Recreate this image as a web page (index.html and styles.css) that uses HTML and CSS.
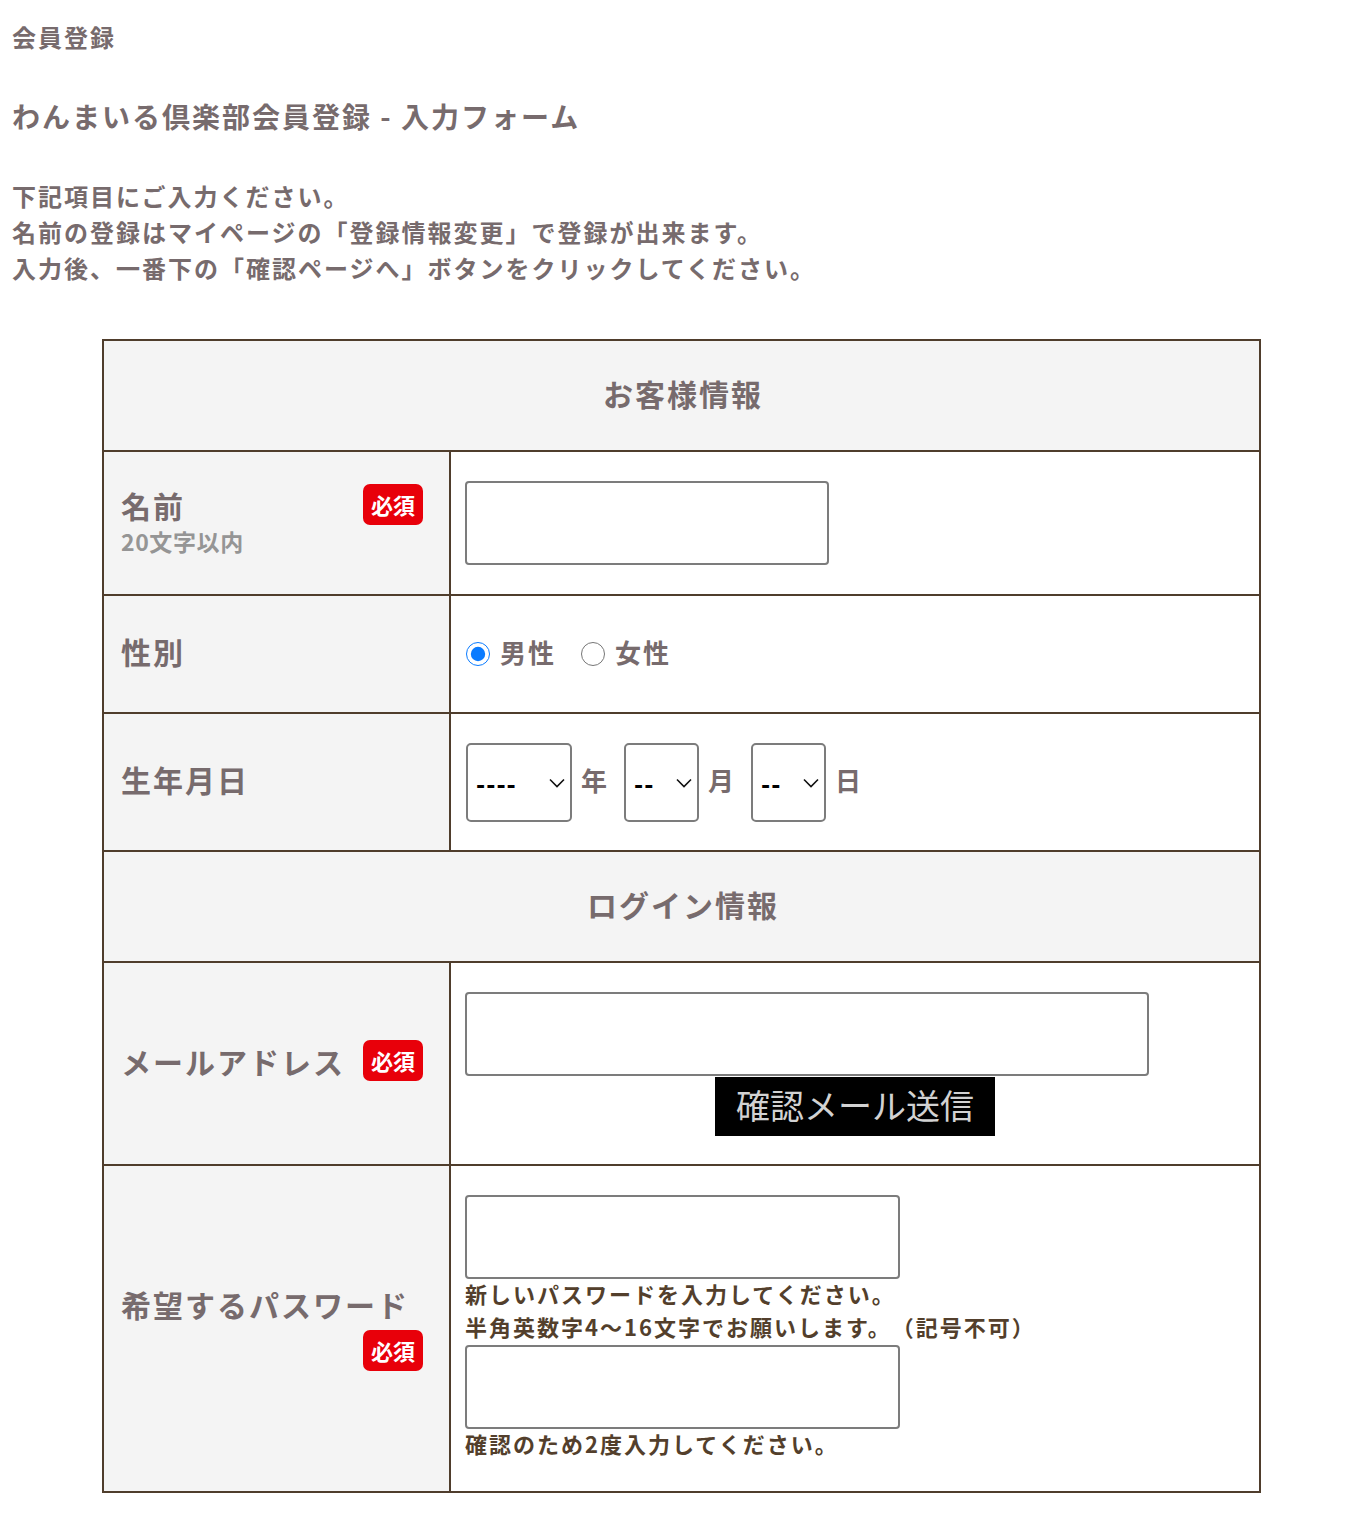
FILE: index.html
```html
<!DOCTYPE html>
<html lang="ja">
<head>
<meta charset="utf-8">
<title>会員登録</title>
<link rel="stylesheet" href="styles.css">
</head>
<body>
<div class="page">
  <h1 class="crumb">会員登録</h1>
  <h2 class="title">わんまいる倶楽部会員登録 - 入力フォーム</h2>
  <p class="intro">下記項目にご入力ください。<br>名前の登録はマイページの「登録情報変更」で登録が出来ます。<br>入力後、一番下の「確認ページへ」ボタンをクリックしてください。</p>

  <div class="form">
    <div class="sec sec-top">お客様情報</div>

    <div class="lab row-name">
      <div class="lab-main">
        <div class="lab-t">名前</div>
        <div class="lab-sub">20文字以内</div>
      </div>
      <span class="req">必須</span>
    </div>
    <div class="val row-name"><input class="tx tx-name" type="text"></div>

    <div class="lab row-gender"><div class="lab-t">性別</div></div>
    <div class="val row-gender">
      <label class="radio"><input type="radio" name="sex" checked><span>男性</span></label>
      <label class="radio"><input type="radio" name="sex"><span>女性</span></label>
    </div>

    <div class="lab row-birth"><div class="lab-t">生年月日</div></div>
    <div class="val row-birth">
      <span class="sel sel-y"><select><option>----</option></select><svg class="chev" viewBox="0 0 16 10" width="16" height="10"><path d="M1 1.5 L8 8.5 L15 1.5" fill="none" stroke="#111" stroke-width="1.6"/></svg></span>
      <span class="unit">年</span>
      <span class="sel sel-s"><select><option>--</option></select><svg class="chev" viewBox="0 0 16 10" width="16" height="10"><path d="M1 1.5 L8 8.5 L15 1.5" fill="none" stroke="#111" stroke-width="1.6"/></svg></span>
      <span class="unit">月</span>
      <span class="sel sel-s"><select><option>--</option></select><svg class="chev" viewBox="0 0 16 10" width="16" height="10"><path d="M1 1.5 L8 8.5 L15 1.5" fill="none" stroke="#111" stroke-width="1.6"/></svg></span>
      <span class="unit">日</span>
    </div>

    <div class="sec">ログイン情報</div>

    <div class="lab row-mail">
      <div class="lab-t">メールアドレス</div>
      <span class="req">必須</span>
    </div>
    <div class="val row-mail val-col">
      <input class="tx tx-mail" type="text">
      <button class="send" type="button">確認メール送信</button>
    </div>

    <div class="lab row-pass lab-wrap">
      <div class="lab-t">希望するパスワード</div>
      <span class="req">必須</span>
    </div>
    <div class="val row-pass val-col">
      <input class="tx tx-pass" type="password">
      <p class="note">新しいパスワードを入力してください。<br>半角英数字4～16文字でお願いします。（記号不可）</p>
      <input class="tx tx-pass" type="password">
      <p class="note">確認のため2度入力してください。</p>
    </div>
  </div>
</div>
</body>
</html>
```

FILE: styles.css
```css
* { box-sizing: border-box; }

body {
  margin: 0;
  background: #fff;
  font-family: "Noto Sans CJK JP", "Noto Sans", sans-serif;
  font-weight: 700;
  color: #776b6d;
  text-spacing-trim: space-all;
}

.page {
  padding: 19px 12px 40px;
}

.crumb {
  margin: 0;
  font-size: 24px;
  line-height: 36px;
  letter-spacing: 2px;
  font-weight: 700;
}

.title {
  margin: 41px 0 0;
  font-size: 28px;
  line-height: 40px;
  letter-spacing: 2px;
  font-weight: 700;
}

.intro {
  margin: 42px 0 0;
  font-size: 24px;
  line-height: 36px;
  letter-spacing: 2px;
}

.form {
  margin: 53px 0 0 90px;
  width: 1159px;
  display: grid;
  grid-template-columns: 347px 808px;
  border: 2px solid #4f3d2c;
  border-top: none;
}

.sec {
  grid-column: 1 / span 2;
  background: #f4f4f4;
  border-top: 2px solid #4f3d2c;
  min-height: 111px;
  display: flex;
  align-items: center;
  justify-content: center;
  font-size: 30px;
  letter-spacing: 2px;
  padding: 0 0 6px 3px;
}

.lab {
  background: #f4f4f4;
  border-top: 2px solid #4f3d2c;
  border-right: 2px solid #4f3d2c;
  padding: 0 26px 6px 17px;
  display: flex;
  align-items: center;
  justify-content: space-between;
}

.val {
  border-top: 2px solid #4f3d2c;
  padding: 0 14px;
  display: flex;
  align-items: center;
}

.row-name { min-height: 144px; }
.row-gender { min-height: 118px; }
.row-birth { min-height: 138px; }
.row-mail { min-height: 203px; }
.row-pass { min-height: 327px; }

.lab-main { display: flex; flex-direction: column; }

.lab-t {
  font-size: 30px;
  line-height: 40px;
  letter-spacing: 2px;
}

.lab-sub {
  font-size: 23px;
  line-height: 30px;
  letter-spacing: 0.6px;
  color: #959595;
  margin-top: 1px;
}

.row-name .req { align-self: flex-start; margin-top: 32px; }

.req {
  display: inline-flex;
  align-items: center;
  justify-content: center;
  width: 60px;
  height: 41px;
  border-radius: 7px;
  background: #e8000a;
  color: #fff;
  font-size: 22px;
  letter-spacing: 0;
  padding-bottom: 2px;
  flex: none;
}

.lab-wrap {
  flex-wrap: wrap;
  align-content: center;
  row-gap: 6px;
  padding-bottom: 2px;
}
.lab-wrap .req { margin-left: auto; }

.tx {
  display: block;
  margin: 0;
  border: 2px solid #7c7c7c;
  border-radius: 4px;
  height: 84px;
  background: #fff;
  font: inherit;
}
.tx-name { width: 364px; margin-bottom: 1px; }
.tx-mail { width: 684px; }
.tx-pass { width: 435px; }

.val-col {
  flex-direction: column;
  align-items: flex-start;
  justify-content: center;
}

.send {
  align-self: center;
  margin: 1px 0 0 0;
  width: 280px;
  height: 59px;
  border: none;
  background: #000;
  color: #d2d2d2;
  font-family: "Noto Sans CJK JP", sans-serif;
  font-weight: 400;
  font-size: 34px;
  letter-spacing: 0;
  padding: 0 0 4px;
}

.note {
  margin: -2px 0 2px;
  font-size: 22px;
  line-height: 33px;
  letter-spacing: 2px;
  color: #533f2c;
}

.radio {
  display: inline-flex;
  align-items: center;
  margin-right: 24px;
  font-size: 26px;
  letter-spacing: 2px;
}
.radio span { padding-bottom: 6px; }
.radio input {
  width: 24px;
  height: 24px;
  margin: 0 10px 0 1px;
  accent-color: #0a7bff;
}

.sel {
  position: relative;
  display: inline-block;
}
.sel select {
  appearance: none;
  -webkit-appearance: none;
  height: 79px;
  border: 2px solid #7c7c7c;
  border-radius: 5px;
  background: #fff;
  color: #000;
  font-family: "Noto Sans CJK JP", sans-serif;
  font-weight: 900;
  font-size: 24px;
  letter-spacing: 1px;
  padding: 0 0 0 8px;
  display: block;
}
.sel-y select { width: 106px; margin-left: 1px; }
.sel-s select { width: 75px; }
.chev {
  position: absolute;
  right: 7px;
  top: 35px;
  pointer-events: none;
}

.unit {
  font-size: 26px;
  letter-spacing: 2px;
  margin: 0 15px 0 9px;
  padding-bottom: 6px;
}
```
